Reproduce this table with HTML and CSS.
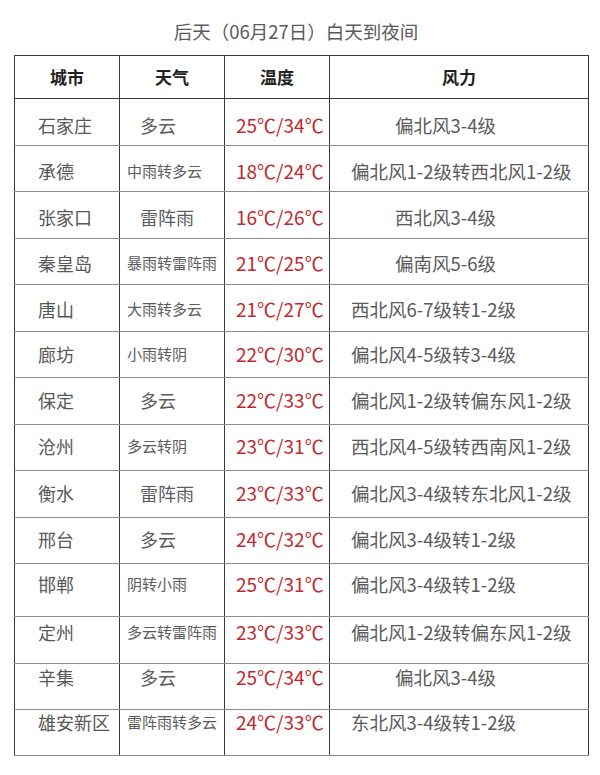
FILE: index.html
```html
<!DOCTYPE html>
<html lang="zh-CN">
<head>
<meta charset="utf-8">
<title>后天（06月27日）白天到夜间</title>
<link rel="stylesheet" href="styles.css">
</head>
<body>
<div class="page">
  <h1 class="title">后天（06月27日）白天到夜间</h1>
  <table class="wx">
    <colgroup>
      <col class="c-city"><col class="c-weather"><col class="c-temp"><col class="c-wind">
    </colgroup>
    <thead>
      <tr><th>城市</th><th>天气</th><th>温度</th><th>风力</th></tr>
    </thead>
    <tbody>
      <tr><td class="city">石家庄</td><td class="weather big">多云</td><td class="temp">25℃/34℃</td><td class="wind short">偏北风3-4级</td></tr>
      <tr><td class="city">承德</td><td class="weather">中雨转多云</td><td class="temp">18℃/24℃</td><td class="wind">偏北风1-2级转西北风1-2级</td></tr>
      <tr><td class="city">张家口</td><td class="weather big">雷阵雨</td><td class="temp">16℃/26℃</td><td class="wind short">西北风3-4级</td></tr>
      <tr><td class="city">秦皇岛</td><td class="weather">暴雨转雷阵雨</td><td class="temp">21℃/25℃</td><td class="wind short">偏南风5-6级</td></tr>
      <tr><td class="city">唐山</td><td class="weather">大雨转多云</td><td class="temp">21℃/27℃</td><td class="wind">西北风6-7级转1-2级</td></tr>
      <tr><td class="city">廊坊</td><td class="weather">小雨转阴</td><td class="temp">22℃/30℃</td><td class="wind">偏北风4-5级转3-4级</td></tr>
      <tr><td class="city">保定</td><td class="weather big">多云</td><td class="temp">22℃/33℃</td><td class="wind">偏北风1-2级转偏东风1-2级</td></tr>
      <tr><td class="city">沧州</td><td class="weather">多云转阴</td><td class="temp">23℃/31℃</td><td class="wind">西北风4-5级转西南风1-2级</td></tr>
      <tr><td class="city">衡水</td><td class="weather big">雷阵雨</td><td class="temp">23℃/33℃</td><td class="wind">偏北风3-4级转东北风1-2级</td></tr>
      <tr><td class="city">邢台</td><td class="weather big">多云</td><td class="temp">24℃/32℃</td><td class="wind">偏北风3-4级转1-2级</td></tr>
      <tr><td class="city">邯郸</td><td class="weather">阴转小雨</td><td class="temp">25℃/31℃</td><td class="wind">偏北风3-4级转1-2级</td></tr>
      <tr><td class="city">定州</td><td class="weather">多云转雷阵雨</td><td class="temp">23℃/33℃</td><td class="wind">偏北风1-2级转偏东风1-2级</td></tr>
      <tr><td class="city">辛集</td><td class="weather big">多云</td><td class="temp">25℃/34℃</td><td class="wind short">偏北风3-4级</td></tr>
      <tr><td class="city">雄安新区</td><td class="weather">雷阵雨转多云</td><td class="temp">24℃/33℃</td><td class="wind">东北风3-4级转1-2级</td></tr>
    </tbody>
  </table>
</div>
</body>
</html>
```
FILE: styles.css
```css
html, body {
  margin: 0;
  padding: 0;
  background: #ffffff;
}

.page {
  padding: 19px 0 0 14px;
  font-family: "Noto Sans CJK SC", "Noto Sans", sans-serif;
  color: #595959;
}

.title {
  margin: 0 0 12px 0;
  width: 574px;
  padding-right: 10px;
  box-sizing: border-box;
  text-align: center;
  font-size: 18.5px;
  line-height: 24px;
  font-weight: 400;
  color: #5a5a5a;
}

.wx {
  width: 574px;
  table-layout: fixed;
  border-collapse: collapse;
}

.c-city, .c-weather, .c-temp { width: 105px; }
.c-wind { width: 259px; }

.wx th {
  height: 42px;
  padding: 0;
  vertical-align: middle;
  font-size: 17px;
  line-height: 24px;
  font-weight: 700;
  color: #222222;
  text-align: center;
  border: 1px solid #3c3c3c;
}

.wx td {
  padding: 0;
  vertical-align: top;
  font-size: 18px;
  line-height: 24px;
  white-space: nowrap;
  text-align: left;
  border-left: 1px solid #3a3a3a;
  border-right: 1px solid #3a3a3a;
  border-top: 1px solid #8c8c8c;
  border-bottom: 1px solid #8c8c8c;
}

.wx tbody tr { height: 46.5px; }
.wx tbody tr:nth-child(11) { height: 52.7px; }
.wx tbody tr:nth-child(12) { height: 47.3px; }
.wx tbody tr:nth-child(13),
.wx tbody tr:nth-child(14) { height: 46px; }

.wx td.city { padding-left: 23px; color: #585858; }
.wx td.weather { padding-left: 7px; font-size: 15px; color: #5c5c5c; }
.wx td.weather.big { padding-left: 20px; font-size: 18px; }
.wx td.temp { padding-left: 11px; font-size: 19px; color: #c2272d; }
.wx td.wind { padding-left: 21px; font-size: 18.5px; color: #5a5a5a; }
.wx td.wind.short { padding-left: 65px; }

/* text sits progressively higher in lower rows, as in the source image */
.wx tbody tr:nth-child(1) td { padding-top: 14px; }
.wx tbody tr:nth-child(2) td { padding-top: 13.6px; }
.wx tbody tr:nth-child(3) td { padding-top: 12.8px; }
.wx tbody tr:nth-child(4) td { padding-top: 12.3px; }
.wx tbody tr:nth-child(5) td { padding-top: 11.8px; }
.wx tbody tr:nth-child(6) td { padding-top: 10.3px; }
.wx tbody tr:nth-child(7) td { padding-top: 10.1px; }
.wx tbody tr:nth-child(8) td { padding-top: 9.4px; }
.wx tbody tr:nth-child(9) td { padding-top: 9.6px; }
.wx tbody tr:nth-child(10) td { padding-top: 9.3px; }
.wx tbody tr:nth-child(11) td { padding-top: 8.3px; }
.wx tbody tr:nth-child(12) td { padding-top: 3.1px; }
.wx tbody tr:nth-child(13) td { padding-top: 0.6px; }
.wx tbody tr:nth-child(14) td { padding-top: 0; }
```
